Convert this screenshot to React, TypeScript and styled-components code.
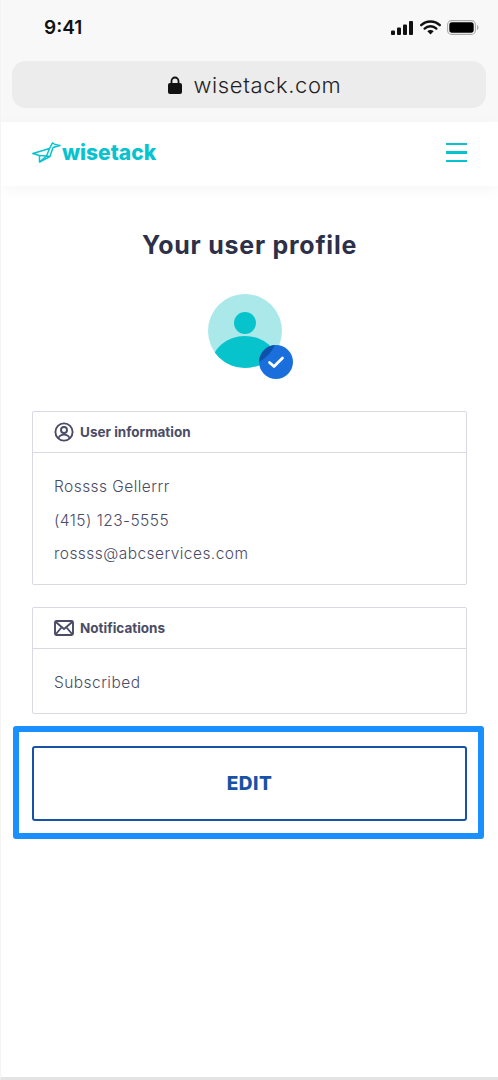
import styled, { createGlobalStyle } from "styled-components";

const GlobalStyle = createGlobalStyle`
  html, body {
    margin: 0;
    padding: 0;
    background: #fff;
  }
  * {
    box-sizing: border-box;
  }
`;

const font = `Inter, "Liberation Sans", sans-serif`;

const Screen = styled.div`
  width: 498px;
  height: 1080px;
  display: flex;
  flex-direction: column;
  overflow: hidden;
  background: #fff;
  font-family: ${font};
  border-left: 1px solid #f4f4f4;
  border-bottom: 3px solid #e4e4e4;
`;

const BrowserChrome = styled.div`
  height: 122px;
  margin-left: -1px;
  background: #f8f8f8;
  padding: 0 12px;
  flex-shrink: 0;
`;

const StatusBar = styled.div`
  height: 61px;
  display: flex;
  align-items: center;
  justify-content: space-between;
  padding: 0 7px 6px 32px;
`;

const Clock = styled.span`
  font-size: 19px;
  font-weight: 600;
  color: #111;
`;

const StatusIcons = styled.div`
  display: flex;
  align-items: center;
  gap: 6px;
`;

const UrlBar = styled.div`
  height: 47px;
  border-radius: 14px;
  background: #ececec;
  display: flex;
  align-items: center;
  justify-content: center;
  gap: 12px;
  padding-left: 11px;
  font-size: 22px;
  font-weight: 300;
  color: #1f1f1f;
  letter-spacing: 0.6px;
`;

const Header = styled.header`
  height: 64px;
  display: flex;
  align-items: center;
  justify-content: space-between;
  padding: 0 31px 3px 31px;
  box-shadow: 0 4px 14px rgba(0, 0, 0, 0.04);
  flex-shrink: 0;
`;

const Logo = styled.div`
  display: flex;
  align-items: center;
  gap: 1px;
`;

const LogoText = styled.span`
  font-size: 21px;
  font-weight: 800;
  color: #07c3cf;
`;

const Burger = styled.div`
  width: 21px;
  display: flex;
  flex-direction: column;
  gap: 6px;
`;

const BurgerLine = styled.span`
  height: 2.5px;
  background: #07c3cf;
`;

const Main = styled.main`
  display: flex;
  flex-direction: column;
  align-items: stretch;
  padding: 44px 31px 0 31px;
`;

const Title = styled.h1`
  margin: 0;
  text-align: center;
  font-size: 25px;
  line-height: 30px;
  font-weight: 700;
  color: #2d3047;
  letter-spacing: 0.75px;
`;

const AvatarWrap = styled.div`
  position: relative;
  width: 74px;
  height: 74px;
  margin: 34px auto 43px;
  transform: translateX(-5px);
`;

const Badge = styled.svg`
  position: absolute;
  left: 51px;
  top: 51px;
`;

const Card = styled.section`
  border: 1.5px solid #d9d9e6;
  border-radius: 2px;
  margin-bottom: 22px;
`;

const CardHeader = styled.div`
  height: 41px;
  display: flex;
  align-items: center;
  gap: 6px;
  padding-left: 21px;
  border-bottom: 1.5px solid #d9d9e6;
  font-size: 13.5px;
  font-weight: 700;
  color: #4a4c66;
`;

const CardBody = styled.div<{ $bottom: number }>`
  display: flex;
  flex-direction: column;
  gap: 10px;
  padding: 22px 20px ${(p) => p.$bottom}px 21px;
`;

const Line = styled.div`
  font-size: 15.5px;
  font-weight: 300;
  line-height: 23.5px;
  color: #4a4c66;
  letter-spacing: 0.45px;
`;

const Highlight = styled.div`
  margin: -10px -17px 0 -19px;
  padding: 14px 11px 12px 13px;
  border: 6px solid #1a8fff;
  border-radius: 3px;
`;

const EditButton = styled.button`
  display: block;
  width: 100%;
  height: 75px;
  border: 2px solid #1652a5;
  border-radius: 3px;
  background: #fff;
  font-family: ${font};
  font-size: 19px;
  font-weight: 800;
  letter-spacing: 0.5px;
  color: #1652a5;
`;

const App = () => {
  return (
    <Screen>
      <GlobalStyle />
      <BrowserChrome>
        <StatusBar>
          <Clock>9:41</Clock>
          <StatusIcons>
            <svg width="23" height="14" viewBox="0 0 23 14">
              <rect x="0" y="9.5" width="4" height="4.5" rx="1" fill="#111" />
              <rect x="6" y="6.5" width="4" height="7.5" rx="1" fill="#111" />
              <rect x="12" y="3.5" width="4" height="10.5" rx="1" fill="#111" />
              <rect x="18" y="0" width="4" height="14" rx="1" fill="#111" />
            </svg>
            <svg width="21" height="15" viewBox="0 0 21 15">
              <path d="M1.2 5.2a13.5 13.5 0 0 1 18.6 0" fill="none" stroke="#111" strokeWidth="2.3" strokeLinecap="round" />
              <path d="M4.6 8.6a8.6 8.6 0 0 1 11.8 0" fill="none" stroke="#111" strokeWidth="2.3" strokeLinecap="round" />
              <path d="M7.3 11.3 10.5 14.6 13.7 11.3a4.6 4.6 0 0 0-6.4 0Z" fill="#111" />
            </svg>
            <svg width="32" height="15" viewBox="0 0 32 15">
              <rect x="0.6" y="0.6" width="27.8" height="13.8" rx="4" fill="none" stroke="#aaa" strokeWidth="1.1" />
              <rect x="2.3" y="2.3" width="24.4" height="10.4" rx="2.6" fill="#000" />
              <path d="M30 5v5c.9-.3 1.5-1.3 1.5-2.5S30.900 5.300 30 5Z" fill="#aaa" />
            </svg>
          </StatusIcons>
        </StatusBar>
        <UrlBar>
          <svg width="14" height="18" viewBox="0 0 14 18">
            <path d="M3.500 8V5a3.500 3.500 0 0 1 7 0v3" fill="none" stroke="#111" strokeWidth="1.800" />
            <rect x="0" y="7" width="14" height="11" rx="2" fill="#111" />
          </svg>
          <span>wisetack.com</span>
        </UrlBar>
      </BrowserChrome>

      <Header>
        <Logo>
          <svg width="29" height="21" viewBox="0 0 29 21" fill="none" stroke="#07c3cf" strokeWidth="1.500" strokeLinejoin="round">
            <path d="M0.800 11.500 17.500 6.500 14.500 14 7.500 13.500Z" />
            <path d="M7.500 13.500 7.500 20 18 14.500 21 5.500 28 3.500 23 2.500 20.500 0.800 17.500 6.500" />
            <path d="M7.500 20 14.500 14 18 14.500" />
          </svg>
          <LogoText>wisetack</LogoText>
        </Logo>
        <Burger>
          <BurgerLine />
          <BurgerLine />
          <BurgerLine />
        </Burger>
      </Header>

      <Main>
        <Title>Your user profile</Title>
        <AvatarWrap>
          <svg width="74" height="74" viewBox="0 0 74 74">
            <defs>
              <clipPath id="avatar-clip">
                <circle cx="37" cy="37" r="37" />
              </clipPath>
            </defs>
            <circle cx="37" cy="37" r="37" fill="#abe8ea" />
            <circle cx="37" cy="29" r="11" fill="#07c3cc" />
            <g clipPath="url(#avatar-clip)">
              <ellipse cx="37" cy="72" rx="34" ry="30" fill="#07c3cc" />
            </g>
          </svg>
          <Badge width="34" height="34" viewBox="0 0 34 34">
            <circle cx="17" cy="17" r="17" fill="#1a6fdc" />
            <path d="M0.400 13.500A17 17 0 0 1 16 0.100 37 37 0 0 1 0 17Z" fill="#0d52a8" />
            <path d="M10.500 17.500 15 21.500 23.500 13" fill="none" stroke="#fff" strokeWidth="2.800" strokeLinecap="round" strokeLinejoin="round" />
          </Badge>
        </AvatarWrap>

        <Card>
          <CardHeader>
            <svg width="20" height="20" viewBox="0 0 20 20" fill="none" stroke="#4a4c66" strokeWidth="1.900">
              <circle cx="10" cy="10" r="8.600" />
              <circle cx="10" cy="8" r="3" />
              <path d="M4.500 16c1-2.400 3-3.400 5.500-3.400s4.500 1 5.500 3.400" />
            </svg>
            <span>User information</span>
          </CardHeader>
          <CardBody $bottom={18}>
            <Line>Rossss Gellerrr</Line>
            <Line>(415) 123-5555</Line>
            <Line>rossss@abcservices.com</Line>
          </CardBody>
        </Card>

        <Card>
          <CardHeader>
            <svg width="20" height="16" viewBox="0 0 20 16" fill="none" stroke="#4a4c66" strokeWidth="1.900">
              <rect x="1" y="1" width="18" height="14" rx="1.500" />
              <path d="M1.500 1.800 10 9l8.500-7.200M1.500 14.500 7.500 7.500M18.500 14.500l-6-7" />
            </svg>
            <span>Notifications</span>
          </CardHeader>
          <CardBody $bottom={19}>
            <Line>Subscribed</Line>
          </CardBody>
        </Card>

        <Highlight>
          <EditButton>EDIT</EditButton>
        </Highlight>
      </Main>
    </Screen>
  );
};

export default App;
